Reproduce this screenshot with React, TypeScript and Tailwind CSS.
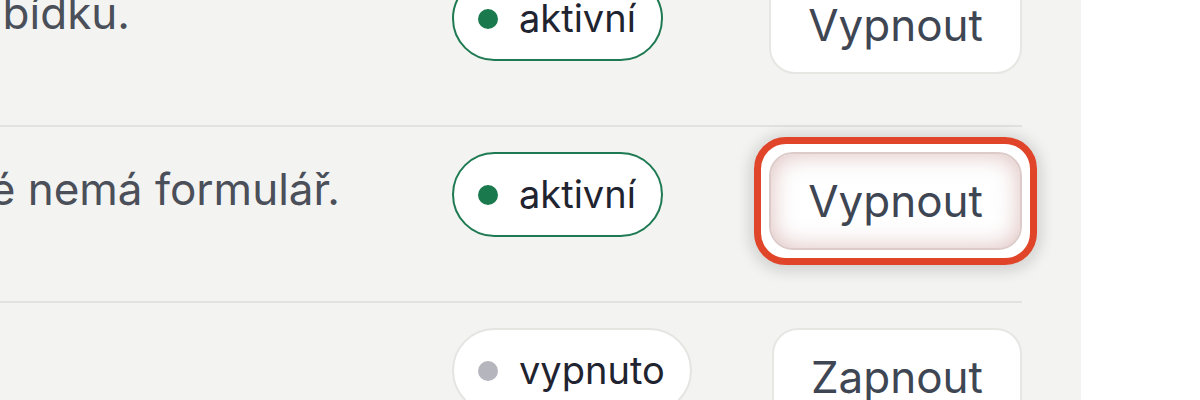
type Row = {
  text: string;
  textBox: string;
  active: boolean;
  highlighted?: boolean;
};

const rows: Row[] = [
  { text: 'Zobrazí se jako položka ve spodní liště a přidá odkaz na nabídku.', textBox: 'w-[130px]', active: true },
  { text: 'Okno se otevře i na stránce, které nemá formulář.', textBox: 'w-[340px]', active: true, highlighted: true },
  { text: 'Odešle souhrn e-mailem.', textBox: 'w-[0px]', active: false },
];

function StatusBadge({ active }: { active: boolean }) {
  return (
    <span
      className={
        active
          ? 'inline-flex h-[85px] items-center gap-[21px] rounded-full border-[2.5px] border-[#1e7a52] bg-white pl-[24px] pr-[25px] text-[38px] text-[#1f2430]'
          : 'inline-flex h-[85px] items-center gap-[21px] rounded-full border-2 border-[#e4e4e1] bg-white pl-[24px] pr-[25px] text-[38px] text-[#1f2430]'
      }
    >
      <span className={active ? 'size-[20px] rounded-full bg-[#1a7a4e]' : 'size-[20px] rounded-full bg-[#b5b5bd]'} />
      {active ? 'aktivní' : 'vypnuto'}
    </span>
  );
}

function ToggleButton({ active, highlighted }: { active: boolean; highlighted?: boolean }) {
  return (
    <div className="relative">
      {highlighted && (
        <span className="pointer-events-none absolute -inset-[15px] rounded-[32px] border-[7px] border-[#e0452a] bg-white shadow-[0_2px_14px_5px_rgba(0,0,0,0.13)]" />
      )}
      <button
        className={
          highlighted
            ? 'relative h-[98px] rounded-[24px] border-2 border-[#dccbc9] bg-white px-[37px] text-[44px] text-[#3f4653] shadow-[inset_0_0_24px_rgba(185,125,120,0.5)]'
            : 'relative h-[98px] rounded-[26px] border-2 border-[#e6e6e3] bg-white px-[37px] text-[44px] text-[#3f4653]'
        }
      >
        {active ? 'Vypnout' : 'Zapnout'}
      </button>
    </div>
  );
}

export default function App() {
  return (
    <div className="flex h-[400px] w-[1200px] overflow-hidden bg-white font-['Inter','Liberation_Sans',sans-serif]">
      <div className="w-[1081px] shrink-0 bg-[#f3f3f1] pr-[59px]">
        <div className="-mt-[49px]">
          {rows.map((row, i) => (
            <div key={i} className="flex items-start border-b-2 border-[#e2e2df] pt-[25px] pb-[51px]">
              <div className="w-[452px] shrink-0">
                <div className={`${row.textBox} mt-[4px] flex justify-end`}>
                  <p className="shrink-0 whitespace-nowrap text-[44px] leading-[1.5] text-[#4a4f59]">{row.text}</p>
                </div>
              </div>
              <div className="w-[290px] shrink-0">
                <StatusBadge active={row.active} />
              </div>
              <div className="flex flex-1 justify-end">
                <ToggleButton active={row.active} highlighted={row.highlighted} />
              </div>
            </div>
          ))}
        </div>
      </div>
    </div>
  );
}
